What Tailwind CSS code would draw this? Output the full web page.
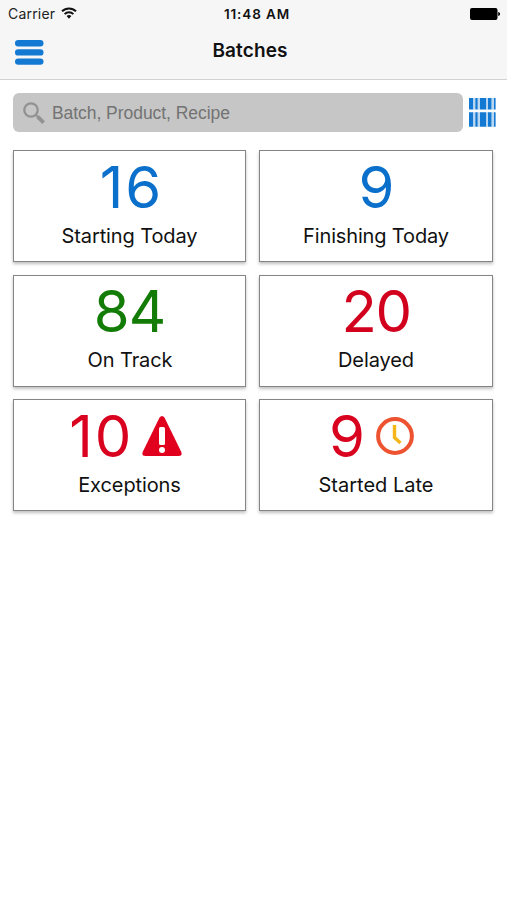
<!DOCTYPE html>
<html lang="en">

<head>
    <meta charset="UTF-8">
    <meta name="viewport" content="width=device-width, initial-scale=1.0">
    <title>Batches</title>
    <script src="https://cdn.jsdelivr.net/npm/@tailwindcss/browser@4"></script>
</head>

<body class="bg-white min-h-screen font-['Inter',sans-serif] text-[#111]">
    <header class="h-20 bg-[#f6f6f7] border-b border-[#d2d2d4]">
        <!-- Status bar -->
        <div class="grid grid-cols-3 items-center h-[27px] pl-2 pr-[7px]">
            <div class="flex items-center gap-[6px] text-[14px] tracking-[0.2px] text-[#222]">
                <span>Carrier</span>
                <svg class="w-4 h-3 -mt-[2px]" viewBox="0 0 16 12" fill="none" stroke="#111" stroke-width="1.9">
                    <path d="M1 4.3a10 10 0 0 1 14 0" />
                    <path d="M3.6 7.1a6.2 6.2 0 0 1 8.8 0" />
                    <path d="M8 11.8 5.6 9.1a3.5 3.5 0 0 1 4.8 0z" fill="#111" stroke="none" />
                </svg>
            </div>
            <span class="text-center text-[13.5px] font-semibold tracking-[0.9px] pl-[6px] pt-px">11:48 AM</span>
            <svg class="w-[30px] h-3 justify-self-end" viewBox="0 0 30 12">
                <rect x="0" y="0" width="27.5" height="12" rx="2" fill="#000" />
                <path d="M28.2 4q2 .5 2 2t-2 2z" fill="#000" />
            </svg>
        </div>

        <!-- Title bar -->
        <div class="grid grid-cols-3 items-center h-[50px] px-[15px]">
            <button class="w-[29px]" aria-label="Menu">
                <svg class="w-[29px] h-[25px]" viewBox="0 0 29 25" fill="#1479d2">
                    <rect width="28.5" height="6.4" rx="3.2" />
                    <rect y="9.2" width="28.5" height="6.4" rx="3.2" />
                    <rect y="18.4" width="28.5" height="6.4" rx="3.2" />
                </svg>
            </button>
            <h1 class="text-center text-[19px] font-semibold tracking-[0.1px] -mt-px -ml-[7px]">Batches</h1>
        </div>
    </header>

    <main class="pl-[13px] pr-[11px] pt-[13px]">
        <!-- Search -->
        <div class="flex items-center gap-[6px]">
            <div class="flex items-center w-[450px] shrink-0 h-[39px] rounded-md bg-[#c6c6c6] pl-[10px] gap-[7px]">
                <svg class="w-[22px] h-[22px]" viewBox="0 0 22 22" fill="none" stroke="#929292">
                    <circle cx="8" cy="8" r="6.7" stroke-width="2.3" />
                    <path d="m12.8 12.8 2 2" stroke-width="2" />
                    <path d="m14.6 14.6 6 6" stroke-width="3.8" />
                </svg>
                <span class="font-['Liberation_Sans',sans-serif] text-[17.5px] text-[#737373] tracking-[-0.05px] pt-px">Batch, Product, Recipe</span>
            </div>
            <svg class="w-[27px] h-[29px] shrink-0" viewBox="0 0 27 29">
                <g fill="#1479d2">
                    <path d="M0 0h4.4v11.5H0zM6.2 0h2.6v11.5H6.2zM10.8 0h6.6v11.5h-6.6zM18.7 0h4v11.5h-4zM24.7 0h1.9v11.5h-1.9z" />
                    <path d="M0 14.2h4.4v14.5H0zM6.2 14.2h2.6v14.5H6.2zM10.8 14.2h6.6v14.5h-6.6zM18.7 14.2h4v14.5h-4zM24.7 14.2h1.9v14.5h-1.9z" />
                </g>
                <path d="M4.4 0h1.8v11.5H4.4zM8.8 0h2v11.5h-2zM17.4 0h1.3v11.5h-1.3zM22.7 0h2v11.5h-2zM4.4 14.2h1.8v14.5H4.4zM8.8 14.2h2v14.5h-2zM17.4 14.2h1.3v14.5h-1.3zM22.7 14.2h2v14.5h-2z" fill="#b9d7f2" />
            </svg>
        </div>

        <!-- Batch counters -->
        <div class="grid grid-cols-[233px_234px] gap-x-[13px] gap-y-[12.5px] mt-[18px]">
            <div class="h-[112px] border border-[#858585] bg-white shadow-[0_2px_3px_rgba(0,0,0,0.25)] text-center">
                <div class="flex justify-center h-[72px] items-center pl-[4px] text-[58px] text-[#0a70cb] tracking-[2px]">16</div>
                <div class="text-[20px] leading-6 tracking-[-0.1px] pt-px">Starting Today</div>
            </div>
            <div class="h-[112px] border border-[#858585] bg-white shadow-[0_2px_3px_rgba(0,0,0,0.25)] text-center">
                <div class="flex justify-center h-[72px] items-center text-[58px] text-[#0a70cb] tracking-[-1px]">9</div>
                <div class="text-[20px] leading-6 tracking-[-0.15px] pt-px">Finishing Today</div>
            </div>
            <div class="h-[112px] border border-[#858585] bg-white shadow-[0_2px_3px_rgba(0,0,0,0.25)] text-center">
                <div class="flex justify-center h-[72px] items-center text-[58px] text-[#137c06] tracking-[-1px]">84</div>
                <div class="text-[20px] leading-6 tracking-[-0.1px] pl-px">On Track</div>
            </div>
            <div class="h-[112px] border border-[#858585] bg-white shadow-[0_2px_3px_rgba(0,0,0,0.25)] text-center">
                <div class="flex justify-center h-[72px] items-center text-[58px] text-[#d2021f] tracking-[-1.5px]">20</div>
                <div class="text-[20px] leading-6 tracking-[-0.1px]">Delayed</div>
            </div>
            <div class="h-[112px] border border-[#858585] bg-white shadow-[0_2px_3px_rgba(0,0,0,0.25)] text-center">
                <div class="flex justify-center h-[72px] items-center gap-[8.5px] pr-[8px] text-[58px] text-[#d9021f] tracking-[2px]">
                    <span>10</span>
                    <svg class="w-10 h-10" viewBox="0 0 40 40">
                        <path d="M17.4 1.8q2.6-3.4 5.2 0l16.6 34q1.6 4.2-2.7 4.2H3.5q-4.3 0-2.7-4.2z" fill="#e2001f" />
                        <rect x="17" y="11" width="6" height="18" rx="1.5" fill="#fff" />
                        <circle cx="20" cy="34" r="3" fill="#fff" />
                    </svg>
                </div>
                <div class="text-[20px] leading-6 tracking-[-0.1px] pt-px">Exceptions</div>
            </div>
            <div class="h-[112px] border border-[#858585] bg-white shadow-[0_2px_3px_rgba(0,0,0,0.25)] text-center">
                <div class="flex justify-center h-[72px] items-center gap-[12px] pr-[9px] text-[58px] text-[#d9021f] tracking-[-1px]">
                    <span>9</span>
                    <svg class="w-[38px] h-[38px]" viewBox="0 0 38 38" fill="none">
                        <circle cx="19" cy="19" r="16.9" stroke="#ed5331" stroke-width="4" />
                        <path d="M18.5 8v12.5l6 5.5" stroke="#f7b51c" stroke-width="3.4" />
                    </svg>
                </div>
                <div class="text-[20px] leading-6 pt-px">Started Late</div>
            </div>
        </div>
    </main>
</body>

</html>
